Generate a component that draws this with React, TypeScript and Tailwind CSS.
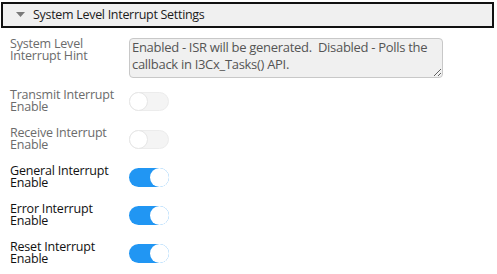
import React from "react";

type Row = { label: string; on: boolean };

const rows: Row[] = [
  { label: "Transmit Interrupt", on: false },
  { label: "Receive Interrupt", on: false },
  { label: "General Interrupt", on: true },
  { label: "Error Interrupt", on: true },
  { label: "Reset Interrupt", on: true },
];

const Toggle = ({ on }: { on: boolean }) =>
  on ? (
    <div className="relative mt-[3px] h-[19px] w-[40px] rounded-full bg-[#2196f3]">
      <div className="absolute right-0 top-0 h-[19px] w-[19px] rounded-full bg-white" />
    </div>
  ) : (
    <div className="relative mt-[3px] h-[19px] w-[40px] rounded-full border border-[#ececec] bg-[#f4f4f4]">
      <div className="absolute -left-px -top-px h-[19px] w-[19px] rounded-full border border-[#e6e6e6] bg-white" />
    </div>
  );

export default function App() {
  return (
    <div className="h-[274px] w-[497px] bg-white pt-[2px] pl-px font-['Open_Sans',sans-serif] text-[12.5px] tracking-[-0.2px]">
      {/* collapsible header */}
      <div className="flex h-[26px] w-[493px] items-center border-2 border-[#111] bg-[#f0f0f0] pl-[13px]">
        <svg width="9" height="6" viewBox="0 0 9 6" className="mr-[8px]">
          <path d="M0 0H9L4.5 5Z" fill="#7a7a7a" />
        </svg>
        <span className="tracking-[-0.3px] text-[#1c1c1c]">System Level Interrupt Settings</span>
      </div>

      <div className="flex flex-col pl-[9px] pt-[10px]">
        <div className="flex">
          <div className="w-[119px] leading-[11.5px] text-[#6b6b6b]">
            System Level
            <br />
            Interrupt Hint
          </div>
          <textarea
            readOnly
            className="h-[40px] w-[314px] rounded-[4px] border border-[#c8c8c8] bg-[#f0f0f0] px-[2px] py-0 text-[13px] leading-[17px] tracking-[-0.3px] text-[#555] outline-none"
            value={"Enabled - ISR will be generated.  Disabled - Polls the callback in I3Cx_Tasks() API."}
          />
        </div>

        <div className="mt-[11px] flex flex-col gap-[15px]">
          {rows.map((r) => (
            <div key={r.label} className="flex">
              <div
                className={
                  "w-[119px] leading-[11.5px] " +
                  (r.on ? "text-[#111]" : "text-[#6b6b6b]")
                }
              >
                {r.label}
                <br />
                Enable
              </div>
              <Toggle on={r.on} />
            </div>
          ))}
        </div>
      </div>
    </div>
  );
}
